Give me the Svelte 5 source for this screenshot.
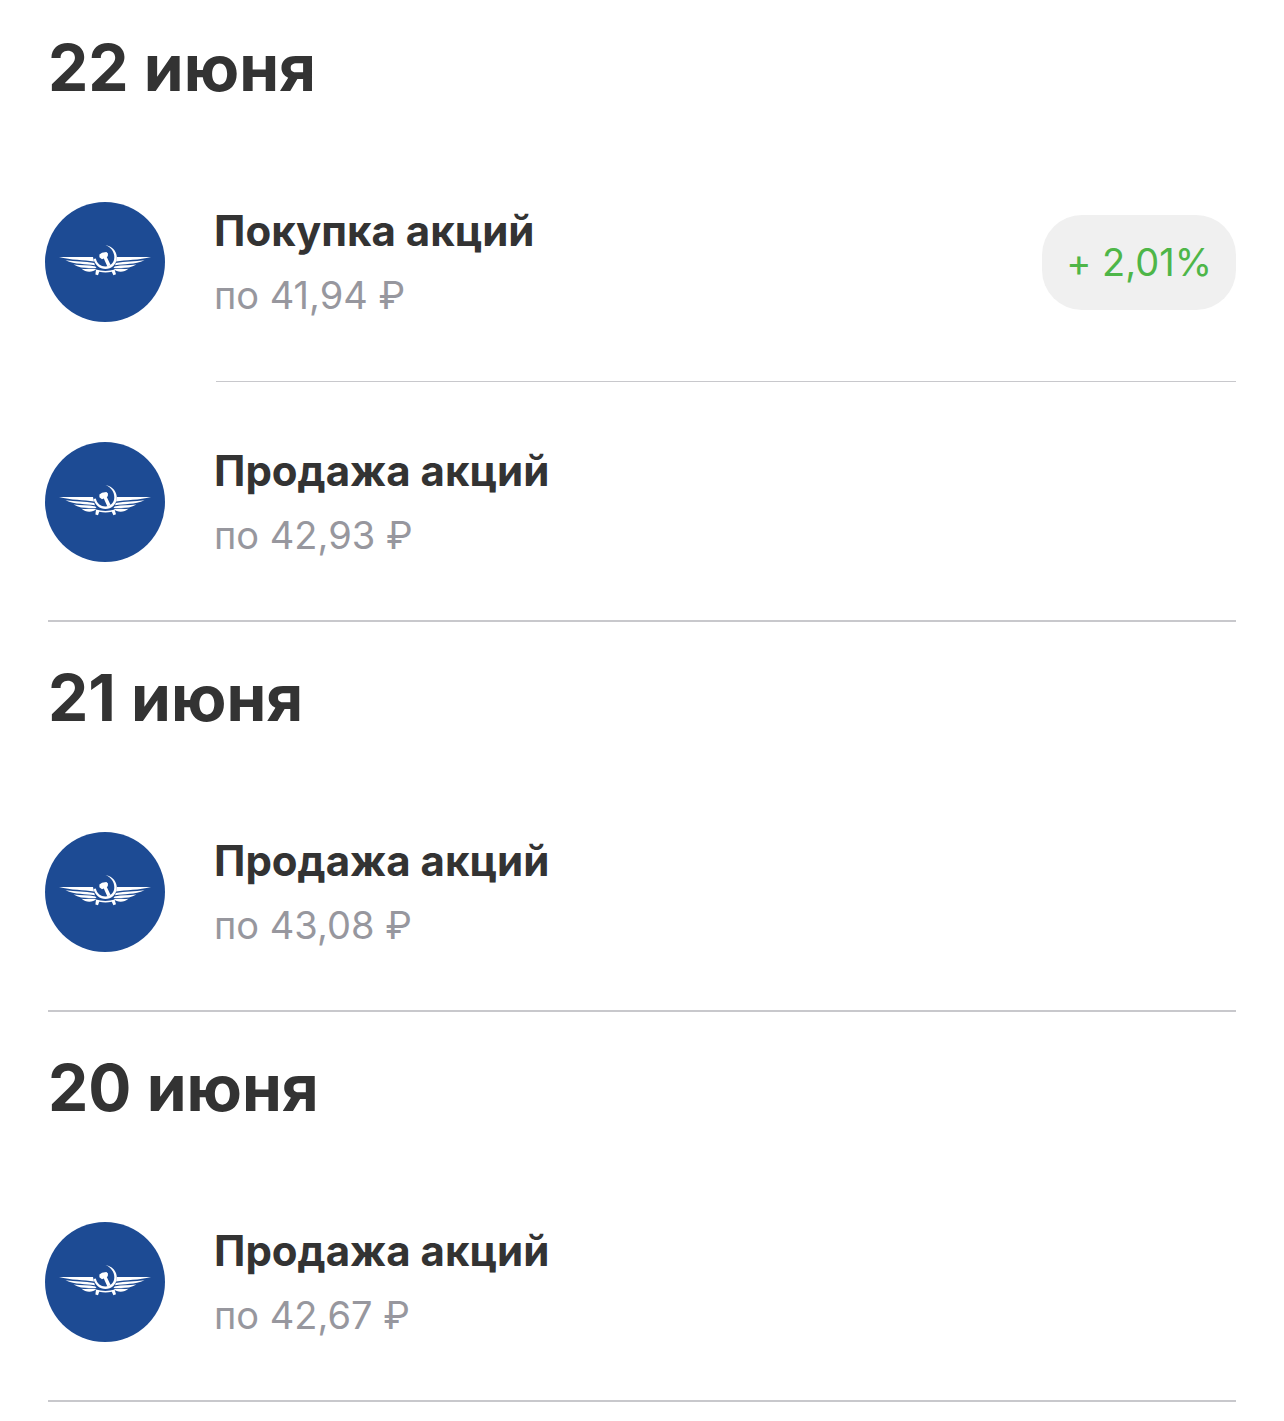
<script>
  let days = [
    {
      date: '22 июня',
      deals: [
        { title: 'Покупка акций', price: '41,94', profit: '+ 2,01%' },
        { title: 'Продажа акций', price: '42,93' }
      ]
    },
    {
      date: '21 июня',
      deals: [{ title: 'Продажа акций', price: '43,08' }]
    },
    {
      date: '20 июня',
      deals: [{ title: 'Продажа акций', price: '42,67' }]
    }
  ]
</script>

{#snippet wing()}
  <path d="M14 55 H48 L49 59.6 C39 57.8 26 58.2 14 55 Z" />
  <path d="M20.5 58.2 C30 59.8 40 59.2 49.2 61 L50 63.2 C41 61.8 30 62.6 20.5 58.2 Z" />
  <path d="M28.5 62.5 C36 63.8 43 62.6 50.4 64.4 L51.5 66 C44 65.6 36 67.2 28.5 62.5 Z" />
  <path d="M36.5 66.8 C42 67.4 46 66.4 51.2 67 C48 70.6 41 70.8 36.5 66.8 Z" />
{/snippet}

<main>
  {#each days as day}
    <section>
      <h2>{day.date}</h2>
      <ul>
        {#each day.deals as deal}
          <li>
            <div class="deal">
              <svg class="logo" viewBox="0 0 120 120" aria-hidden="true">
                <circle cx="60" cy="60" r="60" fill="#1d4b94" />
                <g fill="#fff">
                  {@render wing()}
                  <g transform="translate(120 0) scale(-1 1)">{@render wing()}</g>
                  <!-- sickle -->
                  <path d="M60.5 43 C68 44.5 72 50 71.8 56 C71.5 62.5 66.5 67 60.5 67 C54.5 67 50 63 48.6 57 L50.8 56.4 C52 61.5 55.8 64.4 60.3 64.4 C65.3 64.4 69.1 61 69.3 55.7 C69.5 50.5 66.5 45.5 60.5 43 Z" />
                  <!-- hammer -->
                  <path d="M54.4 55.2 L54.4 52.6 L57 50.8 L61.4 50 L63 51.6 L62.8 54.2 L61.8 55 L65.6 63 L62.4 64.4 L58.8 56.4 L57 57.2 Z" />
                  <path d="M51 67.6 C57 69.4 64 69.4 69.6 67.6 L71 72.2 L68.4 73.2 L66.8 69.8 C62.5 70.8 58.5 70.8 54.2 69.8 L53 73.2 L50.4 72.4 Z" />
                </g>
              </svg>
              <div class="info">
                <h3>{deal.title}</h3>
                <p>по {deal.price} ₽</p>
              </div>
              {#if deal.profit}
                <span class="profit">{deal.profit}</span>
              {/if}
            </div>
          </li>
        {/each}
      </ul>
    </section>
  {/each}
</main>

<style>
  :global(body) {
    background: #fff;
  }
  main {
    padding: 0 48px;
    margin-top: -8px;
    font-family: Inter, "Liberation Sans", sans-serif;
    font-variant-ligatures: no-contextual;
    color: #333;
  }
  section {
    border-bottom: 2px solid #c8c8cc;
  }
  h2 {
    margin: 0;
    padding: 36px 0 34px;
    font-size: 64px;
    line-height: 80px;
    font-weight: 700;
  }
  ul {
    margin: 0;
    padding: 0;
    list-style: none;
  }
    li:not(:last-child)::after {
      content: '';
      display: block;
      height: 1px;
      margin: 1px 0 0 168px;
      background: #c8c8cc;
    }
    .deal {
      display: flex;
      align-items: center;
      padding: 60px 0 58px;
    }
    .logo {
      flex: none;
      width: 120px;
      height: 120px;
      margin-left: -3px;
    }
    .info {
      flex: 1;
      margin-left: 49px;
    }
      h3 {
        margin: 0 0 8px;
        font-size: 42px;
        line-height: 58px;
        font-weight: 700;
      }
      .info p {
        margin: 0;
        font-size: 38px;
        line-height: 54px;
        color: #97979e;
      }
    .profit {
      padding: 24px;
      border-radius: 40px;
      background: #f0f0f0;
      color: #4eb648;
      font-size: 38px;
      line-height: 47px;
    }
</style>
